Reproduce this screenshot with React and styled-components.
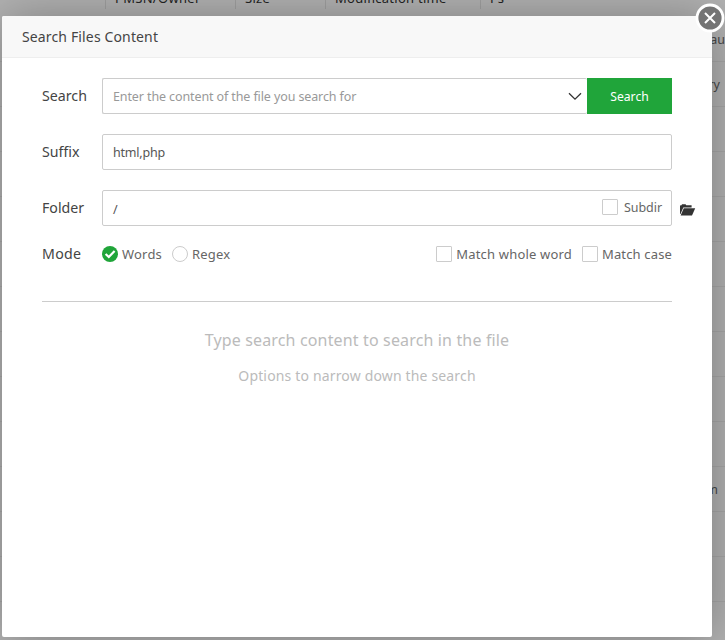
import React from "react";
import styled, { createGlobalStyle } from "styled-components";

const Global = createGlobalStyle`
  * { box-sizing: border-box; }
  html, body { margin: 0; height: 100%; overflow: hidden; }
  body { font-family: "Noto Sans", "Open Sans", sans-serif; font-size: 13px; color: #555; }
`;

const Page = styled.main`
  position: relative;
  width: 725px;
  height: 640px;
  overflow: hidden;
  background: #b2b2b2;
`;

const TableHead = styled.div`
  display: grid;
  grid-template-columns: 106px 130px 90px 155px 1fr;
  height: 17px;
  padding-bottom: 8px;
`;

const HeadCell = styled.div`
  height: 9px;
  padding-left: 9px;
  border-right: 1px solid #a0a0a0;
  line-height: 20px;
  color: #222;
  white-space: nowrap;
  &:last-child { border-right: 0; }
`;

const HeadText = styled.span`
  display: block;
  margin-top: -12px;
  letter-spacing: ${(p) => p.$spacing || 0}px;
`;

const TableRow = styled.div`
  display: flex;
  align-items: center;
  justify-content: flex-end;
  height: 45px;
  padding-right: ${(p) => p.$right || 0}px;
  border-bottom: 1px solid #a7a7a7;
  font-size: 12.5px;
  color: #484848;
`;

const Dialog = styled.section`
  position: absolute;
  left: 2px;
  top: 16px;
  width: 710px;
  height: 621px;
  border-radius: 2px;
  background: #fff;
  box-shadow: 1px 1px 50px rgba(0, 0, 0, 0.3);
`;

const TitleBar = styled.header`
  height: 42px;
  padding-left: 20px;
  border-bottom: 1px solid #eee;
  border-radius: 2px 2px 0 0;
  background: #f8f8f8;
  line-height: 41px;
  font-size: 14px;
  color: #444;
`;

const CloseButton = styled.button`
  position: absolute;
  right: -13px;
  top: -13px;
  width: 30px;
  height: 30px;
  padding: 0;
  border: 0;
  background: none;
  svg { display: block; }
`;

const Form = styled.form`
  display: flex;
  flex-direction: column;
  gap: 20px;
  padding: 20px 12px 0 40px;
`;

const Field = styled.div`
  display: flex;
  align-items: center;
  height: ${(p) => p.$height || 36}px;
`;

const Label = styled.label`
  width: 60px;
  padding-bottom: 2px;
  font-size: 14.2px;
  color: #444;
`;

const Text = styled.span`
  letter-spacing: ${(p) => p.$spacing || 0}px;
  white-space: nowrap;
`;

const PathText = styled(Text)`
  padding-top: 2px;
`;

const SubdirText = styled(Text)`
  padding-top: 2px;
`;

const InputBox = styled.div`
  display: flex;
  align-items: center;
  justify-content: space-between;
  width: ${(p) => p.$width || 570}px;
  height: 36px;
  padding: 1px ${(p) => p.$padRight || 0}px 0 10px;
  border: 1px solid #ccc;
  border-right-width: ${(p) => (p.$joined ? 0 : 1)}px;
  border-radius: 2px;
  font-size: 12.5px;
  color: ${(p) => (p.$placeholder ? "#999" : "#555")};
`;

const SearchButton = styled.button`
  width: 85px;
  height: 36px;
  padding: 1px 0 0;
  border: 0;
  background: #20a53a;
  color: #fff;
  font: inherit;
  font-size: 12.2px;
`;

const FolderIcon = styled.svg`
  margin: 3px 0 0 7px;
`;

const Choice = styled.span`
  display: flex;
  align-items: center;
  gap: ${(p) => p.$gap || 4}px;
  padding-bottom: ${(p) => p.$lift || 0}px;
  font-size: ${(p) => p.$size || 13}px;
  color: #666;
`;

const Box = styled.span`
  width: 16px;
  height: 16px;
  border: 1px solid #ccc;
  border-radius: ${(p) => (p.$round ? "50%" : "1px")};
`;

const ModeOptions = styled.div`
  display: flex;
  justify-content: space-between;
  width: 570px;
`;

const ChoiceGroup = styled.div`
  display: flex;
  gap: 10px;
`;

const Results = styled.div`
  width: 630px;
  margin: 39px 0 0 40px;
  padding-top: 26px;
  border-top: 1px solid #ccc;
  text-align: center;
  color: #bbb;
`;

const ResultTitle = styled.div`
  height: 24px;
  line-height: 24px;
  font-size: 16px;
`;

const ResultHint = styled.div`
  height: 20px;
  margin-top: 14px;
  line-height: 20px;
  font-size: 14px;
`;

const rows = [
  { text: "au", right: 0 },
  { text: "ry", right: 5 },
  ...Array.from({ length: 8 }, () => ({})),
  { text: "m", right: 7 },
  ...Array.from({ length: 3 }, () => ({})),
];

export default function App() {
  return (
    <Page>
      <Global />
      <TableHead>
        <HeadCell />
        <HeadCell><HeadText $spacing={0.3}>PMSN/Owner</HeadText></HeadCell>
        <HeadCell><HeadText $spacing={0.3}>Size</HeadText></HeadCell>
        <HeadCell><HeadText $spacing={0.25}>Modification time</HeadText></HeadCell>
        <HeadCell><HeadText>Ps</HeadText></HeadCell>
      </TableHead>
      {rows.map((r, i) => <TableRow key={i} $right={r.right}>{r.text}</TableRow>)}

      <Dialog>
        <TitleBar><Text $spacing={0.14}>Search Files Content</Text></TitleBar>
        <Form onSubmit={(e) => e.preventDefault()}>
          <Field>
            <Label><Text>Search</Text></Label>
            <InputBox $width={485} $joined $placeholder $padRight={5}>
              <Text $spacing={-0.11}>Enter the content of the file you search for</Text>
              <svg width="14" height="9" viewBox="0 0 14 9" fill="none" stroke="#333" strokeWidth="1.3">
                <path d="M1 1.2 7 7.2 13 1.2" />
              </svg>
            </InputBox>
            <SearchButton type="submit"><Text>Search</Text></SearchButton>
          </Field>
          <Field>
            <Label><Text>Suffix</Text></Label>
            <InputBox><Text $spacing={-0.2}>html,php</Text></InputBox>
          </Field>
          <Field>
            <Label><Text>Folder</Text></Label>
            <InputBox $padRight={9}>
              <PathText>/</PathText>
              <Choice $gap={6} $lift={4} $size={12.5}><Box /><SubdirText $spacing={-0.05}>Subdir</SubdirText></Choice>
            </InputBox>
            <FolderIcon width="17" height="12" viewBox="0 0 17 12" fill="#333">
              <path d="M1 10V1.6L2.5 1.3 3 .3H6.6L7.2 1.3H12.6V3.6H4.3L1.5 10Z" />
              <path d="M4.8 4.3H16.2L13 11.6H1.6Z" />
            </FolderIcon>
          </Field>
        </Form>
        <Form as="div">
          <Field $height={16}>
            <Label><Text $spacing={0.3}>Mode</Text></Label>
            <ModeOptions>
              <ChoiceGroup>
                <Choice>
                  <svg width="16" height="16" viewBox="0 0 16 16">
                    <circle cx="8" cy="8" r="8" fill="#20a53a" />
                    <path d="M3.6 8 6.8 11 12.6 5" fill="none" stroke="#fff" strokeWidth="2.2" />
                  </svg>
                  <Text $spacing={0.2}>Words</Text>
                </Choice>
                <Choice><Box $round /><Text $spacing={0.2}>Regex</Text></Choice>
              </ChoiceGroup>
              <ChoiceGroup>
                <Choice><Box /><Text $spacing={0.18}>Match whole word</Text></Choice>
                <Choice><Box /><Text $spacing={0.15}>Match case</Text></Choice>
              </ChoiceGroup>
            </ModeOptions>
          </Field>
        </Form>
        <Results>
          <ResultTitle><Text $spacing={0.15}>Type search content to search in the file</Text></ResultTitle>
          <ResultHint><Text $spacing={0.16}>Options to narrow down the search</Text></ResultHint>
        </Results>
        <CloseButton aria-label="Close">
          <svg width="30" height="30" viewBox="0 0 30 30">
            <circle cx="15" cy="15" r="13" fill="#747474" stroke="#fff" strokeWidth="2.8" />
            <path d="M10 10 20 20M20 10 10 20" stroke="#fff" strokeWidth="2" />
          </svg>
        </CloseButton>
      </Dialog>
    </Page>
  );
}
